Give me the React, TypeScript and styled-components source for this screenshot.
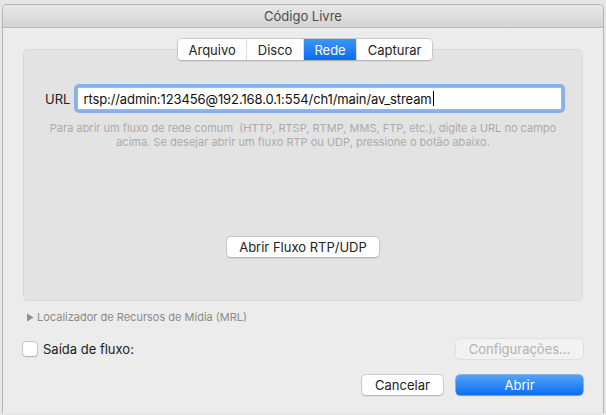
import styled, { createGlobalStyle } from "styled-components";

const GlobalStyle = createGlobalStyle`
  html, body {
    margin: 0;
    padding: 0;
    background: #e6e6e6;
    font-family: Inter, "Liberation Sans", Arial, sans-serif;
    -webkit-font-smoothing: antialiased;
  }
  * { box-sizing: border-box; }
`;

const tabs = ["Arquivo", "Disco", "Rede", "Capturar"];

const App: React.FC = () => {
  return (
    <>
      <GlobalStyle />
      <Window>
        <TitleBar>Código Livre</TitleBar>
        <Body>
          <TabsRow>
            <Segmented>
              {tabs.map((t) => (
                <Segment key={t} $active={t === "Rede"}>
                  {t}
                </Segment>
              ))}
            </Segmented>
          </TabsRow>
          <Panel>
            <UrlRow>
              <UrlLabel>URL</UrlLabel>
              <UrlInput>
                rtsp://admin:123456@192.168.0.1:554/ch1/main/av_stream
                <Caret />
              </UrlInput>
            </UrlRow>
            <Help>
              Para abrir um fluxo de rede comum&nbsp; (HTTP, RTSP, RTMP, MMS, FTP, etc.), digite a URL no campo
              <br />
              acima. Se desejar abrir um fluxo RTP ou UDP, pressione o botão abaixo.
            </Help>
            <CenterRow>
              <PushButton $width={152}>Abrir Fluxo RTP/UDP</PushButton>
            </CenterRow>
          </Panel>
          <Disclosure>
            <svg width="8" height="9" viewBox="0 0 8 9">
              <path d="M1 0.5 L7.5 4.5 L1 8.5 Z" fill="#8e8e8e" />
            </svg>
            Localizador de Recursos de Mídia (MRL)
          </Disclosure>
          <OptionRow>
            <CheckLabel>
              <CheckBox />
              Saída de fluxo:
            </CheckLabel>
            <PushButton $width={127} $disabled>
              Configurações...
            </PushButton>
          </OptionRow>
          <FooterRow>
            <PushButton $width={81}>Cancelar</PushButton>
            <PushButton $width={127} $primary>
              Abrir
            </PushButton>
          </FooterRow>
        </Body>
      </Window>
    </>
  );
};

const Window = styled.div({
  margin: "4px 2px 0 2px",
  height: "409px",
  display: "flex",
  flexDirection: "column",
  background: "#ececec",
  borderRadius: "5px 5px 0 0",
  border: "1px solid #b4b4b4",
  borderBottom: "none",
  overflow: "hidden",
});

const TitleBar = styled.div({
  height: "23px",
  flexShrink: 0,
  display: "flex",
  alignItems: "center",
  justifyContent: "center",
  fontSize: "13px",
  color: "#4d4d4d",
  background: "linear-gradient(#e8e8e8, #d3d3d3)",
  borderBottom: "1px solid #b9b9b9",
});

const Body = styled.div({
  flex: 1,
  display: "flex",
  flexDirection: "column",
  padding: "11px 20px 0 20px",
});

const TabsRow = styled.div({
  display: "flex",
  justifyContent: "center",
  position: "relative",
  zIndex: 1,
  marginBottom: "-11px",
});

const Segmented = styled.div({
  display: "flex",
  height: "21px",
  background: "#fff",
  borderRadius: "4px",
  boxShadow: "0 0 0 0.5px #b0b0b0, 0 0.5px 1.5px rgba(0,0,0,0.25)",
  overflow: "hidden",
  transform: "translateX(2px)",
});

const Segment = styled.div<{ $active?: boolean }>`
  display: flex;
  align-items: center;
  padding: 0 10.5px;
  font-size: 13px;
  color: ${(p) => (p.$active ? "#fff" : "#222")};
  background: ${(p) => (p.$active ? "linear-gradient(#3b96fb, #0a6cf2)" : "#fff")};
  & + & {
    border-left: 1px solid #dcdcdc;
  }
`;

const Panel = styled.div({
  height: "252px",
  background: "#e3e3e3",
  border: "1px solid #d9d9d9",
  borderRadius: "5px",
  display: "flex",
  flexDirection: "column",
  padding: "37px 20px 0 20px",
});

const UrlRow = styled.div({
  display: "flex",
  alignItems: "center",
  gap: "7px",
  paddingLeft: "1px",
});

const UrlLabel = styled.span({
  fontSize: "13px",
  color: "#222",
});

const UrlInput = styled.div({
  width: "485px",
  height: "23px",
  display: "flex",
  alignItems: "center",
  padding: "0 5px",
  fontSize: "13px",
  letterSpacing: "-0.1px",
  color: "#111",
  background: "#fff",
  border: "1px solid #9fb9e0",
  boxShadow: "0 0 0 3px #86b1ec",
  borderRadius: "2px",
  whiteSpace: "nowrap",
});

const Caret = styled.span({
  display: "inline-block",
  width: "1px",
  height: "15px",
  background: "#000",
  marginLeft: "1px",
});

const Help = styled.p({
  margin: "11px 0 0 0",
  textAlign: "center",
  fontSize: "11px",
  lineHeight: "14px",
  color: "#ababab",
});

const CenterRow = styled.div({
  display: "flex",
  justifyContent: "center",
  marginTop: "88px",
});

const PushButton = styled.div<{ $width: number; $primary?: boolean; $disabled?: boolean }>`
  width: ${(p) => p.$width}px;
  height: 20px;
  display: flex;
  align-items: center;
  justify-content: center;
  font-size: 13px;
  border-radius: 4px;
  color: ${(p) => (p.$primary ? "#fff" : p.$disabled ? "#b3b3b3" : "#222")};
  background: ${(p) =>
    p.$primary ? "linear-gradient(#54a3f9, #0b6ef1)" : p.$disabled ? "#f2f2f2" : "#fff"};
  box-shadow: ${(p) =>
    p.$primary
      ? "0 0 0 0.5px #2f7de6, 0 0.5px 1px rgba(0,0,0,0.2)"
      : p.$disabled
      ? "0 0 0 0.5px #d2d2d2"
      : "0 0 0 0.5px #b5b5b5, 0 0.5px 1.5px rgba(0,0,0,0.25)"};
`;

const Disclosure = styled.div({
  display: "flex",
  alignItems: "center",
  gap: "3px",
  marginTop: "9px",
  paddingLeft: "3px",
  height: "14px",
  fontSize: "11px",
  color: "#8a8a8a",
});

const OptionRow = styled.div({
  display: "flex",
  justifyContent: "space-between",
  alignItems: "center",
  marginTop: "15px",
});

const CheckLabel = styled.label({
  display: "flex",
  alignItems: "center",
  gap: "6px",
  fontSize: "13px",
  color: "#222",
});

const CheckBox = styled.span({
  width: "14px",
  height: "14px",
  background: "#fff",
  borderRadius: "3px",
  boxShadow: "0 0 0 0.5px #a5a5a5, 0 0.5px 1px rgba(0,0,0,0.2)",
});

const FooterRow = styled.div({
  display: "flex",
  justifyContent: "flex-end",
  gap: "13px",
  marginTop: "16px",
});

export default App;
